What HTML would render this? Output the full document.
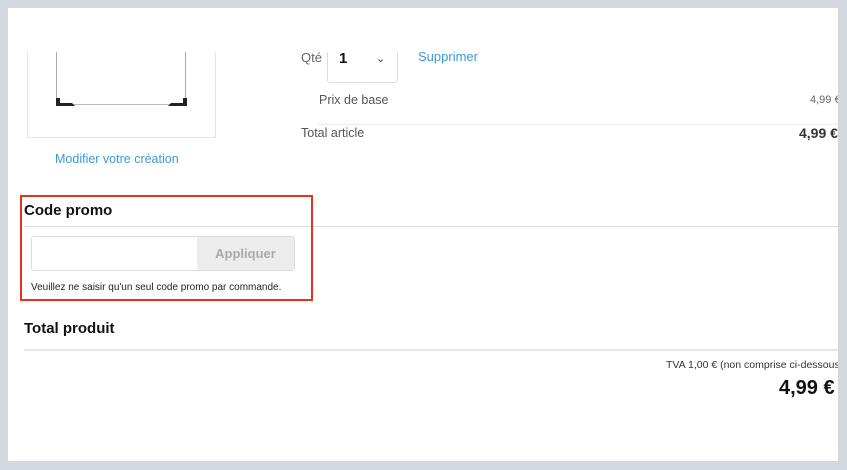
<!DOCTYPE html>
<html><head><meta charset="utf-8"><style>
body{margin:0;width:847px;height:470px;background:#d3d7de;position:relative;overflow:hidden;font-family:"Liberation Sans",sans-serif;}
.panel{position:absolute;left:8px;top:8px;width:830px;height:453px;background:#fff;overflow:hidden;}
.a{position:absolute;white-space:nowrap;}
</style></head><body>
<div class="panel">
  <div class="a" style="left:19px;top:44px;width:187px;height:85px;border:1px solid #e6e6e6;border-top:none;"></div>
  <div class="a" style="left:48px;top:44px;width:1px;height:52px;background:#aaa"></div>
  <div class="a" style="left:177px;top:44px;width:1px;height:52px;background:#aaa"></div>
  <div class="a" style="left:48px;top:96px;width:130px;height:1px;background:#bbb"></div>
  <svg class="a" style="left:47px;top:82px" width="134" height="18"><path d="M1 8V16H20L17 13H5V8Z" fill="#222"/><path d="M132 8V16H113L116 13H128V8Z" fill="#222"/></svg>
  <div class="a" style="left:47px;top:144px;font-size:12.5px;color:#3a9bd5">Modifier votre création</div>
  <div class="a" style="left:293px;top:42px;font-size:13px;color:#666">Qté</div>
  <div class="a" style="left:319px;top:44px;width:69px;height:30px;border:1px solid #ddd;border-top:none;border-radius:0 0 3px 3px"></div>
  <div class="a" style="left:331px;top:42px;font-size:15px;font-weight:bold;color:#111">1</div>
  <div class="a" style="left:368px;top:44px;font-size:11px;color:#333">&#8964;</div>
  <div class="a" style="left:410px;top:41px;font-size:13px;color:#3a9bd5">Supprimer</div>
  <div class="a" style="left:311px;top:85px;font-size:12.5px;color:#555">Prix de base</div>
  <div class="a" style="left:802px;top:86px;font-size:11px;color:#666">4,99 €</div>
  <div class="a" style="left:311px;top:116px;width:519px;border-top:1px dotted #ddd"></div>
  <div class="a" style="left:293px;top:118px;font-size:12.5px;color:#555">Total article</div>
  <div class="a" style="left:791px;top:117px;font-size:14px;font-weight:bold;color:#333">4,99 €</div>

  <div class="a" style="left:16px;top:218px;width:814px;height:1px;background:#ddd"></div>
  <div class="a" style="left:12px;top:187px;width:293px;height:106px;border:2px solid #e8321e;box-sizing:border-box"></div>
  <div class="a" style="left:16px;top:194px;font-size:15px;font-weight:bold;color:#111">Code promo</div>
  <div class="a" style="left:23px;top:228px;width:264px;height:35px;border:1px solid #ddd;border-radius:3px;box-sizing:border-box;background:#fff"></div>
  <div class="a" style="left:189px;top:229px;width:97px;height:33px;background:#ececec;border-radius:0 3px 3px 0;text-align:center;line-height:33px;font-size:13px;font-weight:bold;color:#aaa">Appliquer</div>
  <div class="a" style="left:23px;top:274px;font-size:10px;color:#222">Veuillez ne saisir qu'un seul code promo par commande.</div>

  <div class="a" style="left:16px;top:312px;font-size:15px;font-weight:bold;color:#111">Total produit</div>
  <div class="a" style="left:16px;top:341px;width:814px;height:2px;background:#e5e5e5"></div>
  <div class="a" style="left:658px;top:351px;font-size:10.5px;color:#333">TVA 1,00 € (non comprise ci-dessous)</div>
  <div class="a" style="left:771px;top:369px;font-size:20px;font-weight:bold;color:#111">4,99 €</div>
</div>
</body></html>
